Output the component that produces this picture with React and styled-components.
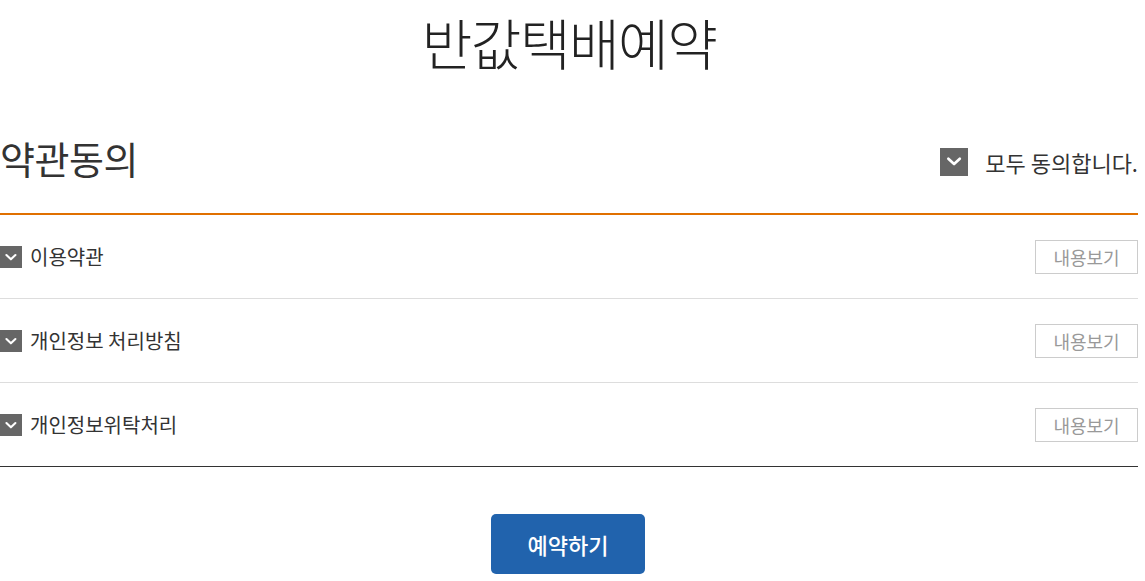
import React, { useState } from 'react'
import styled, { createGlobalStyle } from 'styled-components'

const GlobalStyle = createGlobalStyle`
  html, body {
    margin: 0;
    padding: 0;
    background: #fff;
  }
  body {
    font-family: "Noto Sans CJK KR", "Noto Sans", sans-serif;
    color: #333;
  }
`

const terms = [
  { id: 'use', label: '이용약관' },
  { id: 'privacy', label: '개인정보 처리방침' },
  { id: 'consign', label: '개인정보위탁처리' },
]

const CheckBox = ({ size, checked, onClick }) => (
  <Box size={size} onClick={onClick}>
    {checked && (
      <svg width={size * 0.72} height={size * 0.72} viewBox="0 0 12 12">
        <path d="M2.6 4.6 L6 7.8 L9.4 4.6" fill="none" stroke="#fff" strokeWidth="1.6" strokeLinecap="round" strokeLinejoin="round" />
      </svg>
    )}
  </Box>
)

const App = () => {
  const [checked, setChecked] = useState({ use: true, privacy: true, consign: true })
  const allChecked = terms.every((t) => checked[t.id])

  const toggleAll = () => {
    const next = !allChecked
    setChecked({ use: next, privacy: next, consign: next })
  }

  return (
    <>
      <GlobalStyle />
      <Wrap>
        <Title>반값택배예약</Title>
        <Header>
          <SectionTitle>약관동의</SectionTitle>
          <AllAgree>
            <CheckBox size={28} checked={allChecked} onClick={toggleAll} />
            <AllLabel>모두 동의합니다.</AllLabel>
          </AllAgree>
        </Header>
        <List>
          {terms.map((t) => (
            <Row key={t.id}>
              <RowLabel>
                <CheckBox
                  size={22}
                  checked={checked[t.id]}
                  onClick={() => setChecked({ ...checked, [t.id]: !checked[t.id] })}
                />
                <span>{t.label}</span>
              </RowLabel>
              <ViewButton>내용보기</ViewButton>
            </Row>
          ))}
        </List>
        <Footer>
          <SubmitButton>예약하기</SubmitButton>
        </Footer>
      </Wrap>
    </>
  )
}

export default App

const Wrap = styled.div`
  width: 1138px;
`

const Title = styled.h1`
  margin: 0;
  height: 83px;
  line-height: 83px;
  text-align: center;
  font-size: 55px;
  font-weight: 300;
  color: #222;
  letter-spacing: -1.5px;
`

const Header = styled.div`
  display: flex;
  align-items: center;
  justify-content: space-between;
  padding: 52px 0 33px;
  border-bottom: 2px solid #e07000;
`

const SectionTitle = styled.h2`
  margin: 0;
  font-size: 38px;
  line-height: 45px;
  font-weight: 400;
  color: #333;
  letter-spacing: -0.5px;
`

const AllAgree = styled.div`
  display: flex;
  align-items: center;
  gap: 17px;
  padding-top: 8px;
`

const AllLabel = styled.span`
  font-size: 22px;
  color: #333;
  letter-spacing: 0;
`

const Box = styled.span`
  display: inline-flex;
  align-items: center;
  justify-content: center;
  width: ${(p) => p.size}px;
  height: ${(p) => p.size}px;
  background: #666;
  cursor: pointer;
  flex-shrink: 0;
`

const List = styled.ul`
  list-style: none;
  margin: 0;
  padding: 0;
`

const Row = styled.li`
  display: flex;
  align-items: center;
  justify-content: space-between;
  height: 83px;
  border-bottom: 1px solid #ddd;

  &:last-child {
    border-bottom-color: #333;
  }
`

const RowLabel = styled.label`
  display: flex;
  align-items: center;
  gap: 8px;
  font-size: 20px;
  color: #333;
`

const ViewButton = styled.button`
  width: 103px;
  height: 34px;
  padding: 0;
  border: 1px solid #ccc;
  background: #fff;
  color: #999;
  font-family: inherit;
  font-size: 18px;
  cursor: pointer;
`

const Footer = styled.div`
  display: flex;
  justify-content: center;
  padding-top: 47px;
`

const SubmitButton = styled.button`
  width: 154px;
  height: 60px;
  margin-left: -2px;
  border: 0;
  border-radius: 5px;
  background: #2163ad;
  color: #fff;
  font-family: inherit;
  font-size: 22px;
  font-weight: 500;
  cursor: pointer;
`
